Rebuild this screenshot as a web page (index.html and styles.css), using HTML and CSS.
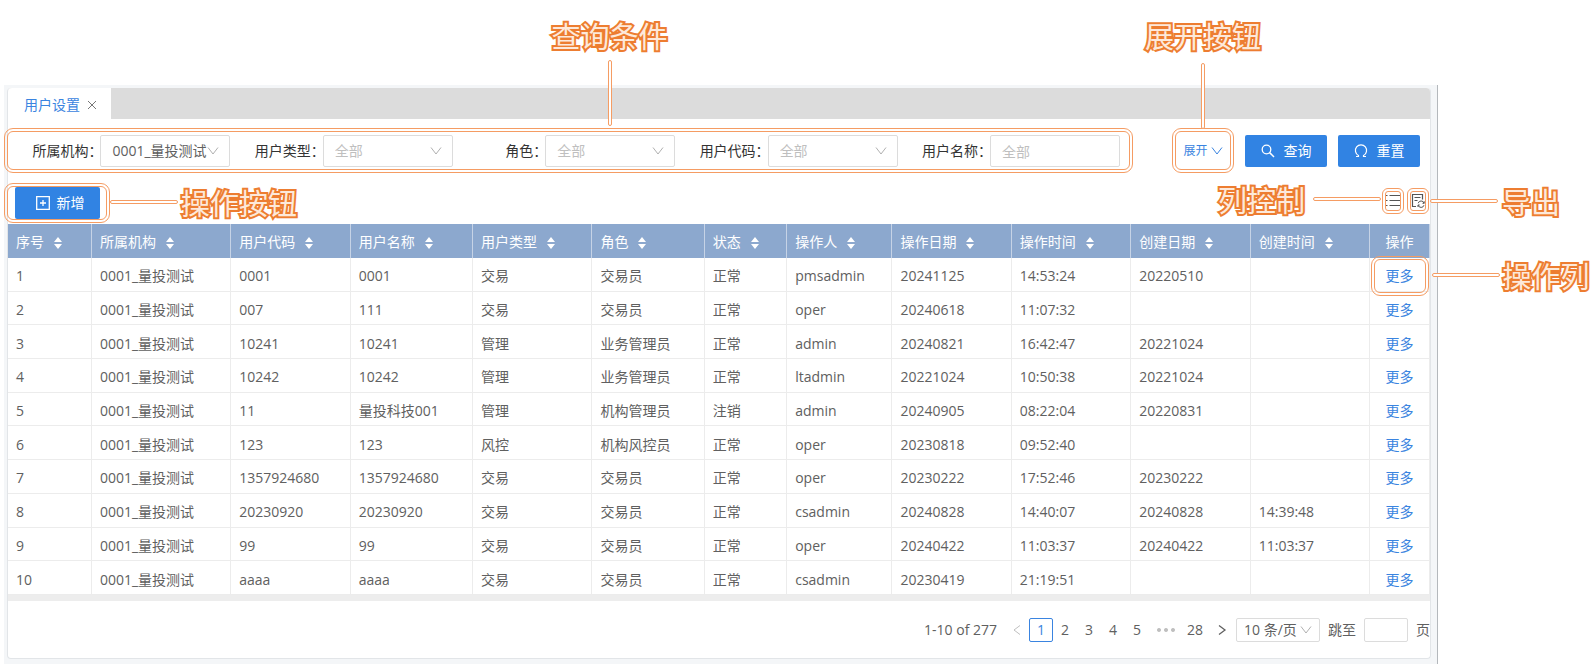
FILE: index.html
```
<!DOCTYPE html>
<html lang="zh-CN">
<head>
<meta charset="utf-8">
<title>用户设置</title>
<link rel="stylesheet" href="styles.css">
</head>
<body>
<svg class="defs" aria-hidden="true">
  <symbol id="down" viewBox="0 0 12 12"><path d="M1 2.500 6 9l5-6.500" fill="none" stroke="currentColor"/></symbol>
  <symbol id="left" viewBox="0 0 12 12"><path d="M9 1.500 3 6l6 4.500" fill="none" stroke="currentColor"/></symbol>
  <symbol id="right" viewBox="0 0 12 12"><path d="M3 1.500 9 6l-6 4.500" fill="none" stroke="currentColor" stroke-width="1.300"/></symbol>
  <symbol id="sort" viewBox="0 0 8 12"><path d="M4 0 8 5H0zM0 7h8L4 12z" fill="currentColor"/></symbol>
</svg>
<main class="window">
  <section class="panel">
    <nav class="tabs">
      <a class="tab" href="#users">用户设置</a>
      <button class="tab-close" type="button" aria-label="关闭"><svg width="10" height="10" viewBox="0 0 10 10"><path d="M1 1l8 8M9 1 1 9" fill="none" stroke="#777"/></svg></button>
    </nav>
    <form class="filters">
      <div class="fields marked">
        <div class="field"><label for="org">所属机构：</label><span class="pick"><select id="org"><option>0001_量投测试</option></select><svg><use href="#down"/></svg></span></div>
        <div class="field"><label for="type">用户类型：</label><span class="pick empty"><select id="type"><option>全部</option></select><svg><use href="#down"/></svg></span></div>
        <div class="field"><label for="role">角色：</label><span class="pick empty"><select id="role"><option>全部</option></select><svg><use href="#down"/></svg></span></div>
        <div class="field"><label for="code">用户代码：</label><span class="pick empty"><select id="code"><option>全部</option></select><svg><use href="#down"/></svg></span></div>
        <div class="field"><label for="name">用户名称：</label><input id="name" type="text" placeholder="全部"></div>
        <div class="callout callout-filters"><strong>查询条件</strong><i></i></div>
      </div>
      <div class="expand marked">
        <button class="link" type="button">展开<svg><use href="#down"/></svg></button>
        <div class="callout callout-expand"><strong>展开按钮</strong><i></i></div>
      </div>
      <button class="primary" type="submit"><svg width="14" height="14" viewBox="0 0 14 14"><circle cx="5.500" cy="5.500" r="4.300" fill="none" stroke="currentColor" stroke-width="1.300"/><path d="M8.600 8.600 13 13" stroke="currentColor" stroke-width="1.500"/></svg>查询</button>
      <button class="primary" type="reset"><svg width="14" height="14" viewBox="0 0 14 14"><path d="M2 12.500h2.500V11.500A5.600 5.600 0 1 1 9.500 11.500V12.500H12" fill="none" stroke="currentColor" stroke-width="1.200"/></svg>重置</button>
    </form>
    <div class="toolbar">
      <div class="add marked">
        <button class="primary" type="button"><svg width="14" height="14" viewBox="0 0 14 14"><path d="M.7.700h12.600v12.600H.7zM7 4v6M4 7h6" fill="none" stroke="currentColor" stroke-width="1.300"/></svg>新增</button>
        <div class="callout callout-add"><i></i><strong>操作按钮</strong></div>
      </div>
      <div class="tools">
        <div class="tool marked">
          <button type="button" aria-label="列控制"><svg width="16" height="16" viewBox="0 0 16 16"><path d="M4.500 2.500H15M4.500 7.500H15M4.500 12.500H15M1 2.500h1.500M1 7.500h1.500M1 12.500h1.500" stroke="#555" stroke-width="1.200"/></svg></button>
          <div class="callout callout-columns"><strong>列控制</strong><i></i></div>
        </div>
        <div class="tool marked">
          <button type="button" aria-label="导出"><svg width="16" height="16" viewBox="0 0 16 16"><path d="M6 13.500H2.500V1.500h10V6.500M4.500 4.500h6M4.500 7.500h3" fill="none" stroke="#555" stroke-width="1.200"/><path d="M8.200 10.200a3 3 0 0 1 5.800 0M14 12.200a3 3 0 0 1-5.800 0M14.200 8.300v2h-1.700M8 14v-2h1.700" fill="none" stroke="#555"/></svg></button>
          <div class="callout callout-export"><i></i><strong>导出</strong></div>
        </div>
      </div>
    </div>
    <table>
      <colgroup><col class="w84"><col class="w139"><col class="w120"><col class="w122"><col class="w120"><col class="w111"><col class="w83"><col class="w106"><col class="w120"><col class="w120"><col class="w120"><col class="w120"><col class="w60"></colgroup>
      <thead><tr id="head"></tr></thead>
      <tbody id="rows"></tbody>
    </table>
    <footer class="pager">
      <span class="total">1-10 of 277</span>
      <button type="button" class="dim" aria-label="上一页"><svg><use href="#left"/></svg></button>
      <button type="button" class="current">1</button>
      <button type="button">2</button>
      <button type="button">3</button>
      <button type="button">4</button>
      <button type="button">5</button>
      <span class="dots"><svg width="18" height="4" viewBox="0 0 18 4"><path d="M2 0a2 2 0 1 0 .01 0zM9 0a2 2 0 1 0 .01 0zM16 0a2 2 0 1 0 .01 0z" fill="currentColor"/></svg></span>
      <button type="button" class="last">28</button>
      <button type="button" aria-label="下一页"><svg><use href="#right"/></svg></button>
      <span class="pick size"><select aria-label="每页条数"><option>10 条/页</option></select><svg><use href="#down"/></svg></span>
      <label for="jump">跳至</label><input id="jump" type="text"><span>页</span>
    </footer>
  </section>
</main>
<script src="table.js"></script>
</body>
</html>
```
FILE: table.js
```
const heads = ["序号", "所属机构", "用户代码", "用户名称", "用户类型", "角色", "状态", "操作人", "操作日期", "操作时间", "创建日期", "创建时间"];
const rows = [
  ["0001", "0001", "交易", "交易员", "正常", "pmsadmin", "20241125", "14:53:24", "20220510", ""],
  ["007", "111", "交易", "交易员", "正常", "oper", "20240618", "11:07:32", "", ""],
  ["10241", "10241", "管理", "业务管理员", "正常", "admin", "20240821", "16:42:47", "20221024", ""],
  ["10242", "10242", "管理", "业务管理员", "正常", "ltadmin", "20221024", "10:50:38", "20221024", ""],
  ["11", "量投科技001", "管理", "机构管理员", "注销", "admin", "20240905", "08:22:04", "20220831", ""],
  ["123", "123", "风控", "机构风控员", "正常", "oper", "20230818", "09:52:40", "", ""],
  ["1357924680", "1357924680", "交易", "交易员", "正常", "oper", "20230222", "17:52:46", "20230222", ""],
  ["20230920", "20230920", "交易", "交易员", "正常", "csadmin", "20240828", "14:40:07", "20240828", "14:39:48"],
  ["99", "99", "交易", "交易员", "正常", "oper", "20240422", "11:03:37", "20240422", "11:03:37"],
  ["aaaa", "aaaa", "交易", "交易员", "正常", "csadmin", "20230419", "21:19:51", "", ""]
];
document.getElementById("head").innerHTML =
  heads.map(h => `<th>${h}<svg class="sort"><use href="#sort"/></svg></th>`).join("") + '<th class="action">操作</th>';
document.getElementById("rows").innerHTML = rows.map((r, i) => {
  const cells = [i + 1, "0001_量投测试", ...r].map(c => `<td>${c}</td>`).join("");
  const note = i === 0 ? '<span class="callout callout-more"><i></i><strong>操作列</strong></span>' : "";
  const cls = i === 0 ? "more marked" : "more";
  return `<tr>${cells}<td class="action"><span class="${cls}"><a href="#more">更多</a>${note}</span></td></tr>`;
}).join("");
```
FILE: styles.css
```
* { box-sizing: border-box; }
body {
  margin: 0;
  background: #fff;
  color: #606060;
  font: 14px/20px "Open Sans", "Noto Sans CJK SC", sans-serif;
}
button, input, select { font: inherit; color: inherit; }
button { padding: 0; border: 0; background: none; }
a { color: #3a84e0; text-decoration: none; }
.defs { display: none; }
.window {
  margin: 85px 158px 0 4px;
  padding: 3px 6px 5px 3px;
  background: #f4f6f8;
  border-right: 1px solid #b4b8bc;
}
.panel { background: #fff; border: 1px solid #e2e5e8; border-top: 0; border-radius: 4px; }

.tabs { display: flex; width: 100%; background: #dcdcdc; border-radius: 4px 4px 0 0; }
.tab { height: 31px; padding: 7px 7px 4px 16px; background: #fff; border-radius: 4px 0 0 0; }
.tab-close { width: 24px; padding-top: 2px; background: #fff; text-align: left; }

.filters { display: flex; align-items: center; gap: 11px; padding: 16px 10px 0 0; }
.fields { display: flex; flex: 1; margin-right: 28px; padding-right: 13px; }
.field { display: flex; flex: 1; align-items: center; justify-content: flex-end; }
.field label { margin-right: -2px; color: #333; white-space: nowrap; }
.pick { position: relative; display: block; }
.pick svg { position: absolute; top: 10px; right: 11px; width: 12px; height: 12px; color: #b0b0b0; pointer-events: none; }
.field .pick, .field input { width: 130px; height: 32px; }
select, input { width: 100%; height: 32px; padding: 0 11px; border: 1px solid #dcdcdc; border-radius: 2px; background: #fff; appearance: none; outline: 0; }
.empty select, input::placeholder { color: #bfbfbf; opacity: 1; }
.expand { display: flex; justify-content: center; width: 62px; height: 32px; }
.link { display: flex; align-items: center; gap: 3px; color: #3a84e0; font-size: 12px; }
.link svg { width: 12px; height: 12px; }
.primary { display: flex; align-items: center; justify-content: center; gap: 9px; width: 82px; height: 32px; background: #3183e3; border-radius: 2px; color: #fff; }

.toolbar { display: flex; align-items: flex-start; justify-content: space-between; padding: 20px 4px 5px 7px; }
.add .primary { width: 85px; padding-left: 5px; gap: 7px; }
.tools { display: flex; gap: 9px; padding-top: 6px; }
.tool button { display: block; width: 16px; height: 16px; }

/* Highlighted controls and their callouts */
.marked { position: relative; }
.marked::before {
  content: "";
  position: absolute;
  inset: -7px -6px;
  border: 4px double #f59c63;
  border-radius: 9px;
  pointer-events: none;
}
.fields.marked::before { inset: -7px 0 -6px -4px; }
.expand.marked::before { inset: -7px 0 -6px; }
.add.marked::before { inset: -4px -10px -4px -11px; }
.tool.marked::before { inset: -5px -3px; border-radius: 6px; }
.more.marked::before { inset: -10px -15px; }
.callout { position: absolute; z-index: 1; display: flex; align-items: center; pointer-events: none; }
.callout strong {
  color: #fde9da;
  font: 400 29px/36px "Noto Sans CJK SC", sans-serif;
  -webkit-text-stroke: 4px #ed7d31;
  paint-order: stroke fill;
  white-space: nowrap;
}
.callout i { display: block; flex: none; width: 68px; height: 4px; border: 1px solid #f59c63; border-radius: 2px; background: #fff; }
.callout-filters, .callout-expand { flex-direction: column; left: 50%; bottom: 100%; transform: translateX(-50%); }
.callout-filters i, .callout-expand i { width: 4px; height: 66px; margin-top: 7px; }
.callout-filters { bottom: calc(100% + 9px); margin-left: 39px; }
.callout-expand { bottom: calc(100% + 6px); }
.callout-expand i { margin-top: 10px; }
.callout-add { left: calc(100% + 10px); top: -3px; gap: 3px; }
.callout-columns { right: calc(100% + 4px); top: -12px; gap: 8px; }
.callout-export { left: calc(100% + 4px); top: -10px; gap: 4px; }
.callout-more { left: calc(100% + 18px); top: -9px; gap: 3px; }

table { width: 100%; height: 371px; border-collapse: separate; border-spacing: 0; table-layout: fixed; }
.w84 { width: 5.9%; } .w139 { width: 9.8%; } .w120 { width: 8.4%; } .w122 { width: 8.6%; }
.w111 { width: 7.9%; } .w83 { width: 5.8%; } .w106 { width: 7.4%; } .w60 { width: 4.2%; }
th, td { height: 33px; padding: 4px 0 0 8px; border-right: 1px solid #ececec; border-bottom: 1px solid #ececec; text-align: left; white-space: nowrap; }
th { height: 34px; padding-top: 1px; background: #8ca8ce; border-color: #c6d3e6; border-bottom: 0; color: #fff; font-weight: 400; }
.sort { width: 8px; height: 12px; margin-left: 10px; vertical-align: -2px; }
.action { padding-left: 0; text-align: center; }
.more { display: inline-block; }

.pager { display: flex; align-items: center; justify-content: flex-end; height: 63px; padding-top: 1px; border-top: 6px solid #ededed; }
.pager button { display: flex; align-items: center; justify-content: center; width: 24px; height: 24px; }
.pager button svg { width: 12px; height: 12px; }
.pager .current { border: 1px solid #3a84e0; border-radius: 2px; color: #3a84e0; }
.pager .dim { color: #bfbfbf; }
.pager .last { margin-right: 3px; }
.total { margin-right: 8px; }
.dots { display: flex; justify-content: center; width: 34px; color: #bfbfbf; }
.size { width: 84px; margin: 0 8px 0 2px; }
.size svg { top: 6px; right: 8px; }
.size select, .pager input { height: 24px; padding: 0 7px; }
.pager input { width: 44px; margin: 0 8px; padding: 0 4px; }
```
